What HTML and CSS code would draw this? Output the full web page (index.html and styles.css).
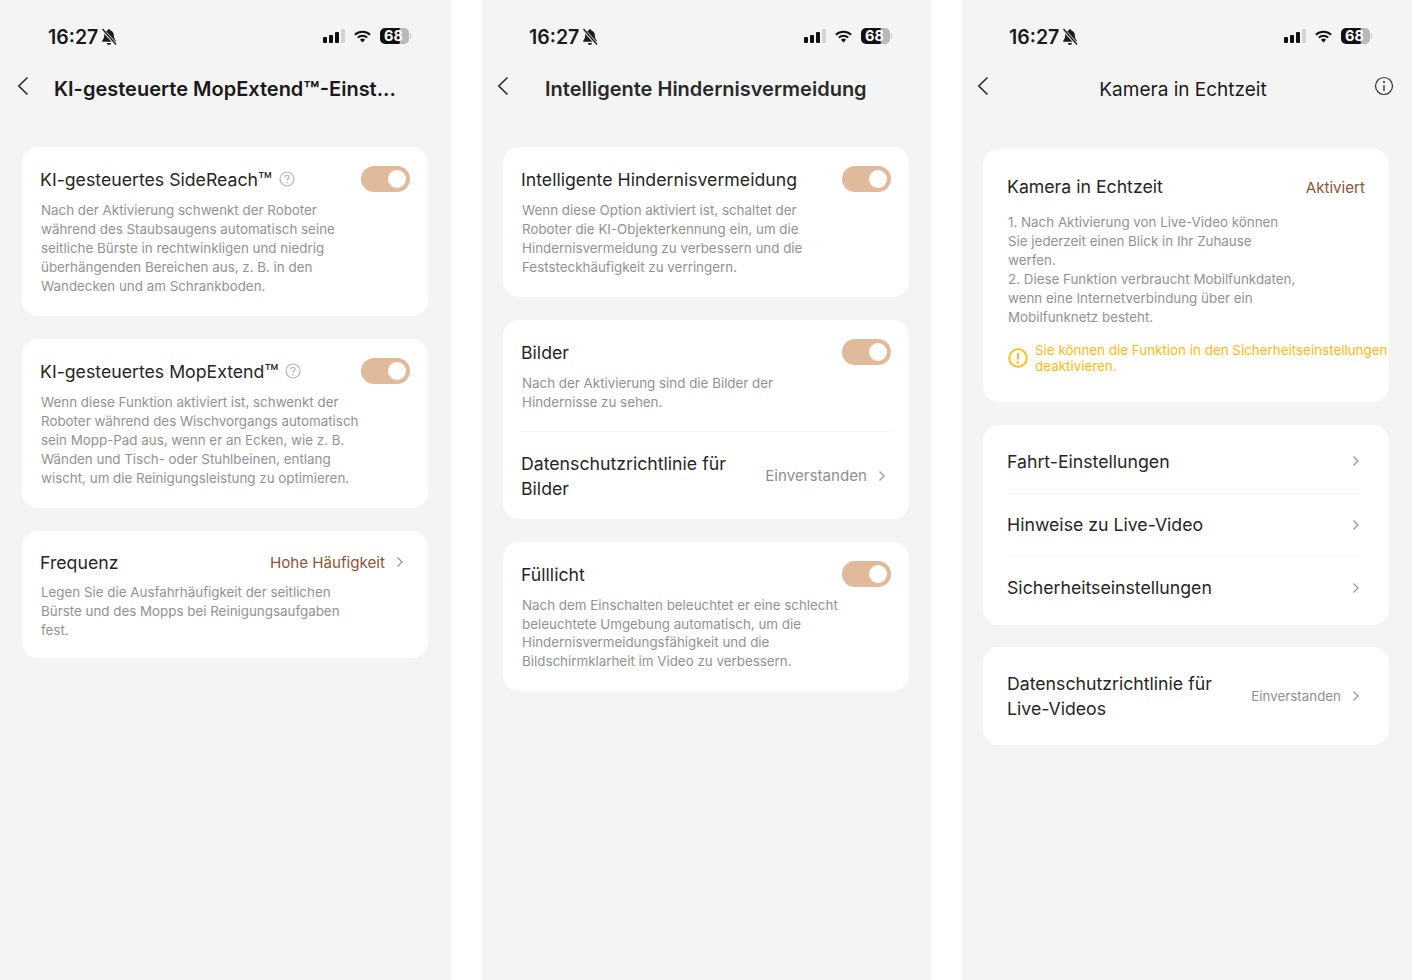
FILE: index.html
```html
<!DOCTYPE html>
<html lang="de">
<head>
    <meta charset="UTF-8" />
    <meta name="viewport" content="width=device-width, initial-scale=1.0"/>
    <title>Einstellungen</title>
    <link rel="stylesheet" href="styles.css">
</head>
<body>
    <svg class="sprites" width="0" height="0">
        <symbol id="bell" viewBox="0 0 18 18">
            <path d="M9 1.2c.8 0 1.3.5 1.4 1.2 2.2.6 3.4 2.4 3.4 4.7 0 2.800.7 4.300 2 5.600v1H2.200v-1c1.300-1.300 2-2.800 2-5.600 0-2.300 1.200-4.100 3.400-4.700C7.700 1.700 8.200 1.200 9 1.200zM7 15h4c0 1.200-.9 2-2 2s-2-.8-2-2z" fill="#1a1a1a"/>
            <path d="M2.500 1.500l13.500 15" stroke="#f4f4f4" stroke-width="3.200"/>
            <path d="M2.500 1l13.500 15.500" stroke="#1a1a1a" stroke-width="1.400"/>
        </symbol>
        <symbol id="wifi" viewBox="0 0 18 13">
            <path d="M1 4.600a11.600 11.600 0 0 1 16 0" fill="none" stroke="#111" stroke-width="2.100"/>
            <path d="M4 7.700a7.300 7.300 0 0 1 10 0" fill="none" stroke="#111" stroke-width="2.100"/>
            <path d="M6.300 10a3.900 3.900 0 0 1 5.400 0L9 12.800z" fill="#111"/>
        </symbol>
        <symbol id="back" viewBox="0 0 12 20">
            <path d="M10.500 1.500L1.800 10l8.700 8.500" fill="none" stroke="#222" stroke-width="1.500"/>
        </symbol>
        <symbol id="chev" viewBox="0 0 8 12">
            <path d="M1.500 1.500L6 6l-4.500 4.500" fill="none" stroke="#9a9a9a" stroke-width="1.300"/>
        </symbol>
        <symbol id="help" viewBox="0 0 16 16">
            <circle cx="8" cy="8" r="7" fill="none" stroke="#b5b5b5" stroke-width="1.200"/>
            <path d="M5.900 6.300C5.900 5 6.900 4.300 8 4.300s2.100.7 2.100 1.900c0 1.600-2.100 1.600-2.100 3.300" fill="none" stroke="#b5b5b5" stroke-width="1.200"/>
            <circle cx="8" cy="11.600" r=".8" fill="#b5b5b5"/>
        </symbol>
    </svg>

    <div class="screens">
        <section class="phone">
            <div class="status">
                <div class="time">16:27 <svg class="bell"><use href="#bell"/></svg></div>
                <div class="indicators">
                    <div class="signal"><i></i><i></i><i></i><i class="off"></i></div>
                    <svg class="wifi"><use href="#wifi"/></svg>
                    <div class="battery"><span>68</span></div>
                </div>
            </div>
            <div class="nav">
                <svg class="back"><use href="#back"/></svg>
                <h1 class="nav-title bold">KI-gesteuerte MopExtend<span class="tm">™</span>-Einst...</h1>
            </div>
            <div class="cards">
                <div class="card">
                    <div class="head">
                        <div class="title"><span>KI-gesteuertes SideReach<span class="tm">™</span></span> <svg class="help"><use href="#help"/></svg></div>
                        <div class="toggle"></div>
                    </div>
                    <p class="desc">Nach der Aktivierung schwenkt der Roboter<br>während des Staubsaugens automatisch seine<br>seitliche Bürste in rechtwinkligen und niedrig<br>überhängenden Bereichen aus, z. B. in den<br>Wandecken und am Schrankboden.</p>
                </div>
                <div class="card">
                    <div class="head">
                        <div class="title"><span>KI-gesteuertes MopExtend<span class="tm">™</span></span> <svg class="help"><use href="#help"/></svg></div>
                        <div class="toggle"></div>
                    </div>
                    <p class="desc">Wenn diese Funktion aktiviert ist, schwenkt der<br>Roboter während des Wischvorgangs automatisch<br>sein Mopp-Pad aus, wenn er an Ecken, wie z. B.<br>Wänden und Tisch- oder Stuhlbeinen, entlang<br>wischt, um die Reinigungsleistung zu optimieren.</p>
                </div>
                <div class="card freq">
                    <div class="head">
                        <div class="title">Frequenz</div>
                        <div class="value accent">Hohe Häufigkeit <svg class="chev"><use href="#chev"/></svg></div>
                    </div>
                    <p class="desc tight">Legen Sie die Ausfahrhäufigkeit der seitlichen<br>Bürste und des Mopps bei Reinigungsaufgaben<br>fest.</p>
                </div>
            </div>
        </section>

        <section class="phone middle">
            <div class="status">
                <div class="time">16:27 <svg class="bell"><use href="#bell"/></svg></div>
                <div class="indicators">
                    <div class="signal"><i></i><i></i><i></i><i class="off"></i></div>
                    <svg class="wifi"><use href="#wifi"/></svg>
                    <div class="battery"><span>68</span></div>
                </div>
            </div>
            <div class="nav">
                <svg class="back"><use href="#back"/></svg>
                <h1 class="nav-title semi">Intelligente Hindernisvermeidung</h1>
            </div>
            <div class="cards">
                <div class="card">
                    <div class="head">
                        <div class="title">Intelligente Hindernisvermeidung</div>
                        <div class="toggle"></div>
                    </div>
                    <p class="desc">Wenn diese Option aktiviert ist, schaltet der<br>Roboter die KI-Objekterkennung ein, um die<br>Hindernisvermeidung zu verbessern und die<br>Feststeckhäufigkeit zu verringern.</p>
                </div>
                <div class="card no-bottom">
                    <div class="head">
                        <div class="title">Bilder</div>
                        <div class="toggle"></div>
                    </div>
                    <p class="desc">Nach der Aktivierung sind die Bilder der<br>Hindernisse zu sehen.</p>
                    <div class="policy">
                        <div class="title">Datenschutzrichtlinie für<br>Bilder</div>
                        <div class="value">Einverstanden <svg class="chev"><use href="#chev"/></svg></div>
                    </div>
                </div>
                <div class="card">
                    <div class="head">
                        <div class="title">Fülllicht</div>
                        <div class="toggle"></div>
                    </div>
                    <p class="desc squeezed">Nach dem Einschalten beleuchtet er eine schlecht<br>beleuchtete Umgebung automatisch, um die<br>Hindernisvermeidungsfähigkeit und die<br>Bildschirmklarheit im Video zu verbessern.</p>
                </div>
            </div>
        </section>

        <section class="phone last">
            <div class="status">
                <div class="time">16:27 <svg class="bell"><use href="#bell"/></svg></div>
                <div class="indicators">
                    <div class="signal"><i></i><i></i><i></i><i class="off"></i></div>
                    <svg class="wifi"><use href="#wifi"/></svg>
                    <div class="battery"><span>68</span></div>
                </div>
            </div>
            <div class="nav center">
                <svg class="back"><use href="#back"/></svg>
                <h1 class="nav-title">Kamera in Echtzeit</h1>
                <svg class="info" viewBox="0 0 20 20">
                    <circle cx="10" cy="10" r="8.500" fill="none" stroke="#333" stroke-width="1.200"/>
                    <path d="M10 9v6" stroke="#333" stroke-width="1.300"/>
                    <circle cx="10" cy="6" r="1" fill="#333"/>
                </svg>
            </div>
            <div class="cards">
                <div class="card live">
                    <div class="live-head">
                        <div class="title">Kamera in Echtzeit</div>
                        <div class="value accent">Aktiviert</div>
                    </div>
                    <p class="desc">1. Nach Aktivierung von Live-Video können<br>Sie jederzeit einen Blick in Ihr Zuhause<br>werfen.<br>2. Diese Funktion verbraucht Mobilfunkdaten,<br>wenn eine Internetverbindung über ein<br>Mobilfunknetz besteht.</p>
                    <div class="warning">
                        <svg class="warn-icon" viewBox="0 0 20 20">
                            <circle cx="10" cy="10" r="8.800" fill="none" stroke="#fdb913" stroke-width="1.800"/>
                            <path d="M10 5v6.500" stroke="#fdb913" stroke-width="2"/>
                            <circle cx="10" cy="14.500" r="1.200" fill="#fdb913"/>
                        </svg>
                        <div>Sie können die Funktion in den Sicherheitseinstellungen<br>deaktivieren.</div>
                    </div>
                </div>
                <div class="card list">
                    <div class="list-row"><div class="title">Fahrt-Einstellungen</div><svg class="chev"><use href="#chev"/></svg></div>
                    <div class="list-row"><div class="title">Hinweise zu Live-Video</div><svg class="chev"><use href="#chev"/></svg></div>
                    <div class="list-row"><div class="title">Sicherheitseinstellungen</div><svg class="chev"><use href="#chev"/></svg></div>
                </div>
                <div class="card list">
                    <div class="list-row tall">
                        <div class="title">Datenschutzrichtlinie für<br>Live-Videos</div>
                        <div class="value small">Einverstanden <svg class="chev"><use href="#chev"/></svg></div>
                    </div>
                </div>
            </div>
        </section>
    </div>
</body>
</html>
```

FILE: styles.css
```css
body {
    margin: 0;
    background: #fff;
    font-family: Inter, "Noto Sans", sans-serif;
    color: #262626;
}

.sprites {
    position: absolute;
}

.screens {
    display: flex;
    gap: 31px;
    height: 980px;
    overflow: hidden;
}

.phone {
    width: 451px;
    background: #f4f4f4;
}

.phone.middle {
    width: 449px;
}

.phone.last {
    width: 450px;
}

/* status bar */
.status {
    display: flex;
    justify-content: space-between;
    align-items: center;
    height: 66px;
    padding: 6px 40px 0 48px;
    box-sizing: border-box;
}

.phone.middle .status {
    padding-left: 47px;
    padding-right: 39px;
}

.phone.last .status {
    padding-left: 47px;
    padding-right: 40px;
}

.time {
    display: flex;
    align-items: center;
    gap: 2px;
    margin-top: 1px;
    font-size: 19.500px;
    font-weight: 600;
    color: #1a1a1a;
}

.bell {
    width: 18px;
    height: 18px;
}

.indicators {
    display: flex;
    align-items: center;
    gap: 9px;
}

.signal {
    display: flex;
    align-items: flex-end;
    gap: 2px;
    height: 14px;
}

.signal i {
    width: 4px;
    background: #111;
    border-radius: 1px;
    height: 6px;
}

.signal i:nth-child(2) { height: 8px; }
.signal i:nth-child(3) { height: 11px; }
.signal i.off { height: 14px; background: #d4d4d4; }

.wifi {
    width: 17px;
    height: 13px;
}

.battery {
    position: relative;
    width: 29px;
    height: 16px;
    margin-right: 2px;
    border-radius: 5px;
    background: linear-gradient(to right, #111 66%, #b9b9b9 70%);
    color: #fff;
    font-size: 14.500px;
    font-weight: 700;
    line-height: 16px;
    padding-left: 4px;
    box-sizing: border-box;
}

.battery span {
    display: block;
    width: 22px;
    overflow: hidden;
}

.battery::after {
    content: "";
    position: absolute;
    top: 5px;
    right: -2px;
    width: 1.500px;
    height: 6px;
    border-radius: 0 2px 2px 0;
    background: #c4c4c4;
}

/* nav bar */
.nav {
    display: flex;
    align-items: center;
    height: 44px;
    padding-left: 17px;
}

.phone.middle .nav {
    padding-left: 15px;
}

.back {
    width: 12px;
    height: 20px;
    margin-top: -4px;
    flex: none;
}

.nav-title {
    margin: 1px 0 0 25px;
    font-size: 20px;
    font-weight: 400;
    color: #1a1a1a;
    white-space: nowrap;
}

.nav-title.bold {
    font-weight: 600;
}

.nav-title.semi {
    margin-left: 36px;
    font-weight: 600;
    color: #2a2a2a;
}

.tm {
    font-size: 1.300em;
    line-height: 0;
    vertical-align: -0.140em;
}

.nav.center {
    position: relative;
    justify-content: center;
    padding-left: 0;
}

.nav.center .nav-title {
    margin: 2px 8px 0 0;
    font-size: 19px;
}

.nav.center .back {
    position: absolute;
    left: 15px;
    top: 10px;
    margin: 0;
}

.info {
    position: absolute;
    right: 18px;
    top: 10px;
    width: 20px;
    height: 20px;
}

/* cards */
.cards {
    display: flex;
    flex-direction: column;
    gap: 22.500px;
    margin: 36.500px 23px 0 22px;
}

.phone.middle .cards {
    margin-left: 21px;
    margin-right: 22px;
}

.phone.last .cards {
    margin-top: 39px;
    margin-left: 21px;
    margin-right: 23px;
}

.card {
    background: #fff;
    border-radius: 16px;
    padding: 19.500px 18px 20px;
}

.card.no-bottom {
    padding-bottom: 18.500px;
}

.card.freq {
    padding-top: 18.500px;
    padding-bottom: 18.500px;
}

.head {
    display: flex;
    justify-content: space-between;
    align-items: center;
    height: 26px;
}

.title {
    display: flex;
    align-items: center;
    font-size: 17.700px;
    line-height: 25px;
    color: #262626;
    white-space: nowrap;
}

.help {
    width: 16px;
    height: 16px;
    margin-left: 7px;
}

.toggle {
    position: relative;
    width: 49px;
    height: 26px;
    border-radius: 13px;
    background: #e0ba9b;
}

.toggle::after {
    content: "";
    position: absolute;
    top: 4px;
    right: 4px;
    width: 18px;
    height: 18px;
    border-radius: 50%;
    background: #fff;
}

.desc {
    margin: 9px 0 0 1px;
    font-size: 13.360px;
    line-height: 19px;
    color: #929292;
    white-space: nowrap;
}

.desc.tight {
    margin-top: 7.500px;
}

.desc.squeezed {
    line-height: 18.700px;
}

.value {
    display: flex;
    align-items: center;
    gap: 11px;
    font-size: 15.150px;
    color: #8f8f8f;
    white-space: nowrap;
}

.value.accent {
    color: #8a5638;
}

.freq .value {
    padding-right: 6px;
}

.value.small {
    font-size: 13.350px;
}

.chev {
    width: 8px;
    height: 12px;
    flex: none;
}

.policy {
    display: flex;
    justify-content: space-between;
    align-items: center;
    margin-top: 19px;
    padding: 18.500px 5px 0 0;
    border-top: 1px solid #f6f6f6;
}

/* camera screen */
.card.live {
    padding: 25px 0 28px 24px;
}

.live-head {
    display: flex;
    justify-content: space-between;
    align-items: flex-start;
    padding-right: 24px;
}

.live-head .value {
    margin-top: 1px;
    line-height: 25px;
}

.live .desc {
    margin-top: 13px;
}

.warning {
    display: flex;
    align-items: center;
    gap: 7px;
    margin: 15px 0 0 1px;
    font-size: 13.400px;
    line-height: 16px;
    color: #fdb913;
    white-space: nowrap;
}

.warn-icon {
    width: 20px;
    height: 20px;
    flex: none;
}

.card.list {
    padding: 0 29px 0 24px;
}

.list-row {
    display: flex;
    justify-content: space-between;
    align-items: center;
    height: 63px;
    border-top: 1px solid #f6f6f6;
    box-sizing: border-box;
}

.list-row:first-child {
    border-top: none;
}

.card.list .list-row:first-child {
    margin-top: 5px;
}

.card.list .list-row:last-child {
    margin-bottom: 6px;
}

.list-row.tall {
    height: 87px;
}
```
